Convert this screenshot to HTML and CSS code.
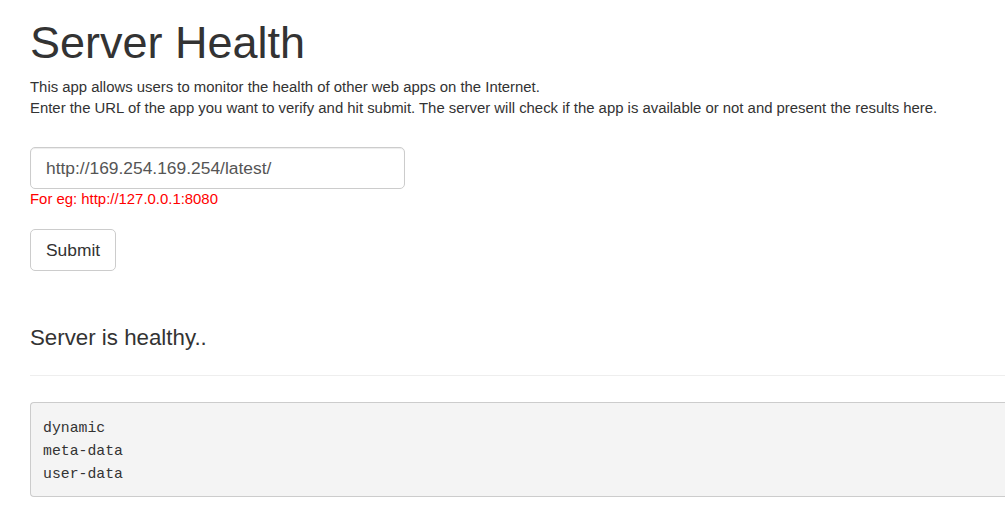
FILE: index.html
```html
<!DOCTYPE html>
<html lang="en">
<head>
<meta charset="utf-8">
<title>Server Health</title>
<link rel="stylesheet" href="styles.css">
</head>
<body>
<div class="container">
  <h1 class="title">Server Health</h1>
  <p class="intro">This app allows users to monitor the health of other web apps on the Internet.<br>Enter the URL of the app you want to verify and hit submit. The server will check if the app is available or not and present the results here.</p>
  <form class="check-form">
    <div class="form-group">
      <input class="url-input" type="text" value="http://169.254.169.254/latest/">
      <div class="hint">For eg: http://127.0.0.1:8080</div>
    </div>
    <button class="btn" type="button">Submit</button>
  </form>
  <h3 class="status">Server is healthy..</h3>
  <hr class="divider">
  <pre class="result">dynamic
meta-data
user-data</pre>
</div>
</body>
</html>
```
FILE: styles.css
```css
html, body {
  margin: 0;
  padding: 0;
  background: #fff;
}
body {
  font-family: "Liberation Sans", Arial, Helvetica, sans-serif;
  font-size: 14.9px;
  line-height: 21px;
  color: #333;
}
.container {
  padding: 0 0 0 30px;
}
.title {
  font-size: 45px;
  font-weight: 400;
  line-height: 48px;
  margin: 19px 0 10px;
}
.intro {
  margin: 0 0 28px;
}
.check-form {
  margin: 0;
}
.form-group {
  margin-bottom: 20px;
}
.url-input {
  display: block;
  box-sizing: border-box;
  width: 375px;
  height: 42px;
  padding: 0 15px;
  border: 1px solid #ccc;
  border-radius: 5px;
  font-family: "Liberation Sans", Arial, sans-serif;
  font-size: 17.4px;
  color: #555;
  background: #fff;
  box-shadow: inset 0 1px 1px rgba(0,0,0,.075);
  outline: none;
}
.hint {
  color: #f00;
  font-size: 14.9px;
  line-height: 20px;
}
.btn {
  box-sizing: border-box;
  height: 42px;
  padding: 0 15px;
  border: 1px solid #ccc;
  border-radius: 5px;
  background: #fff;
  color: #333;
  font-family: "Liberation Sans", Arial, sans-serif;
  font-size: 17.4px;
}
.status {
  font-size: 22.3px;
  font-weight: 400;
  line-height: 26px;
  margin: 54px 0 0;
}
.divider {
  border: 0;
  border-top: 1px solid #eee;
  margin: 24px 0 26px;
}
.result {
  margin: 0;
  padding: 14px 12px 10px;
  background: #f4f4f4;
  border: 1px solid #ccc;
  border-right: 0;
  border-radius: 4px 0 0 4px;
  font-family: "Liberation Mono", "DejaVu Sans Mono", monospace;
  font-size: 14.8px;
  line-height: 23px;
  color: #333;
}
```
